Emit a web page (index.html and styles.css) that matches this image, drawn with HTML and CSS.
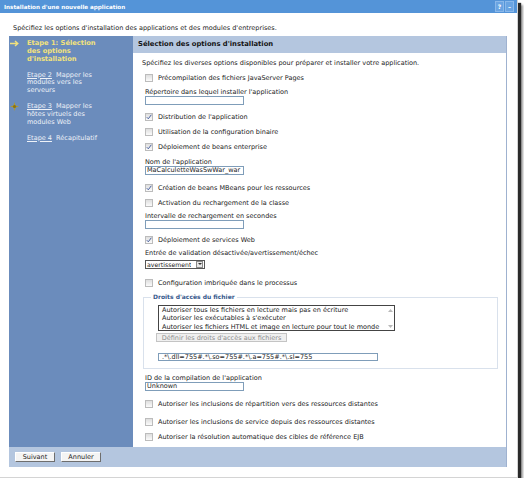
FILE: index.html
```html
<!DOCTYPE html>
<html lang="fr">
<head>
  <meta charset="UTF-8" />
  <title>Installation d'une nouvelle application</title>
  <link rel="stylesheet" href="styles.css">
</head>
<body>
  <div class="window">
    <div class="titlebar">
      <span class="title">Installation d'une nouvelle application</span>
      <span class="tb-icons">
        <span class="tb-btn">?</span>
        <span class="tb-btn">–</span>
      </span>
    </div>

    <p class="intro">Spécifiez les options d'installation des applications et des modules d'entreprises.</p>

    <div class="wizard">
      <ul class="steps">
        <li class="step current">
          <span class="marker">
            <svg width="9" height="7" viewBox="0 0 9 7"><path d="M0 3.5H7.5M5 1L7.8 3.5L5 6" fill="none" stroke="#f2e27c" stroke-width="1.4"/></svg>
          </span>
          <span>Etape 1: Sélection<br>des options<br>d'installation</span>
        </li>
        <li class="step">
          <span class="marker"></span>
          <span><a href="#">Etape 2</a>&nbsp; Mapper les<br>modules vers les<br>serveurs</span>
        </li>
        <li class="step">
          <span class="marker">
            <svg width="9" height="9" viewBox="0 0 9 9"><path d="M4.5 0L5.4 3.6L9 4.5L5.4 5.4L4.5 9L3.6 5.4L0 4.5L3.6 3.6Z" fill="#b89a22"/><circle cx="4.5" cy="4.5" r="1.6" fill="#8a7314"/></svg>
          </span>
          <span><a href="#">Etape 3</a>&nbsp; Mapper les<br>hôtes virtuels des<br>modules Web</span>
        </li>
        <li class="step">
          <span class="marker"></span>
          <span><a href="#">Etape 4</a>&nbsp; Récapitulatif</span>
        </li>
      </ul>

      <div class="panel">
        <h2 class="panel-head">Sélection des options d'installation</h2>
        <div class="panel-body">
          <p class="desc">Spécifiez les diverses options disponibles pour préparer et installer votre application.</p>

          <label class="check m-a"><span class="cb"></span>Précompilation des fichiers JavaServer Pages</label>
          <div class="field-label m-b">Répertoire dans lequel installer l'application</div>
          <div class="text-input"></div>

          <label class="check m-c"><span class="cb on"><svg width="6" height="6" viewBox="0 0 6 6"><path d="M0.8 3.2L2.3 4.8L5.3 0.8" fill="none" stroke="#4a62a0" stroke-width="1"/></svg></span>Distribution de l'application</label>
          <label class="check"><span class="cb"></span>Utilisation de la configuration binaire</label>
          <label class="check"><span class="cb on"><svg width="6" height="6" viewBox="0 0 6 6"><path d="M0.8 3.2L2.3 4.8L5.3 0.8" fill="none" stroke="#4a62a0" stroke-width="1"/></svg></span>Déploiement de beans enterprise</label>
          <div class="field-label m-d">Nom de l'application</div>
          <div class="text-input">MaCalculetteWasSwWar_war</div>

          <label class="check m-e"><span class="cb on"><svg width="6" height="6" viewBox="0 0 6 6"><path d="M0.8 3.2L2.3 4.8L5.3 0.8" fill="none" stroke="#4a62a0" stroke-width="1"/></svg></span>Création de beans MBeans pour les ressources</label>
          <label class="check"><span class="cb"></span>Activation du rechargement de la classe</label>
          <div class="field-label m-f">Intervalle de rechargement en secondes</div>
          <div class="text-input"></div>

          <label class="check m-g"><span class="cb on"><svg width="6" height="6" viewBox="0 0 6 6"><path d="M0.8 3.2L2.3 4.8L5.3 0.8" fill="none" stroke="#4a62a0" stroke-width="1"/></svg></span>Déploiement de services Web</label>
          <div class="field-label m-f">Entrée de validation désactivée/avertissement/échec</div>
          <div class="select">
            <span class="select-value">avertissement</span>
            <span class="select-btn"><svg width="4" height="2" viewBox="0 0 4 2"><path d="M0 0H4L2 2Z" fill="#333"/></svg></span>
          </div>

          <label class="check m-h"><span class="cb"></span>Configuration imbriquée dans le processus</label>

          <fieldset class="perms">
            <legend>Droits d'accès du fichier</legend>
            <div class="listbox">
              <div class="list-items">
                <div>Autoriser tous les fichiers en lecture mais pas en écriture</div>
                <div>Autoriser les exécutables à s'exécuter</div>
                <div>Autoriser les fichiers HTML et image en lecture pour tout le monde</div>
              </div>
              <div class="scroll">
                <svg width="5" height="3" viewBox="0 0 5 3"><path d="M0 3H5L2.5 0Z" fill="#b9b9b9"/></svg>
                <svg width="5" height="3" viewBox="0 0 5 3"><path d="M0 0H5L2.5 3Z" fill="#b9b9b9"/></svg>
              </div>
            </div>
            <button class="btn-disabled" disabled>Définir les droits d'accès aux fichiers</button>
            <div class="text-input wide">.*\.dll=755#.*\.so=755#.*\.a=755#.*\.sl=755</div>
          </fieldset>

          <div class="field-label m-i">ID de la compilation de l'application</div>
          <div class="text-input">Unknown</div>

          <label class="check m-j"><span class="cb"></span>Autoriser les inclusions de répartition vers des ressources distantes</label>
          <label class="check m-k"><span class="cb"></span>Autoriser les inclusions de service depuis des ressources distantes</label>
          <label class="check"><span class="cb"></span>Autoriser la résolution automatique des cibles de référence EJB</label>
        </div>
      </div>

      <div class="actions">
        <button class="btn">Suivant</button>
        <button class="btn">Annuler</button>
      </div>
    </div>
  </div>
</body>
</html>
```

FILE: styles.css
```css
body {
  margin: 0;
  background: #ffffff;
  font-family: "DejaVu Sans", Verdana, sans-serif;
  font-size: 6.5px;
  color: #222;
}
.window {
  width: 518px;
  height: 478px;
  background: #fff;
  border-right: 1px solid #d4d4d4;
  border-bottom: 1px solid #d4d4d4;
  box-sizing: border-box;
  box-shadow: 3px 3px 1px #2a2a2a, 5px 5px 2px rgba(60, 60, 60, 0.5);
}
.titlebar {
  height: 13px;
  background: #5494d8;
  display: flex;
  align-items: center;
  justify-content: space-between;
  padding: 0 3px 0 4px;
}
.title {
  color: #fff;
  font-weight: bold;
  font-size: 5.6px;
}
.tb-icons {
  display: flex;
  gap: 1px;
}
.tb-btn {
  width: 7px;
  height: 9px;
  line-height: 9px;
  text-align: center;
  color: #fff;
  font-size: 6px;
  font-weight: bold;
  background: #6aa4e2;
  border: 1px solid #8ab8ea;
}
.intro {
  margin: 0 0 3px 13px;
  padding-top: 10px;
  line-height: 10px;
}
.wizard {
  margin-left: 9px;
  width: 498px;
  height: 431px;
  display: grid;
  grid-template-columns: 124px 1fr;
  grid-template-rows: 1fr 20px;
}
.steps {
  list-style: none;
  margin: 0;
  padding: 4px 0 0 1px;
  background: #6b8cbc;
  color: #eef2f8;
  line-height: 7.75px;
}
.step {
  display: flex;
  margin-bottom: 8.25px;
}
.step.current {
  color: #f2e27c;
  font-weight: bold;
  font-size: 6.7px;
}
.step a {
  color: #eef2f8;
  text-decoration: underline;
}
.marker {
  width: 17px;
  flex: none;
  display: flex;
  align-items: center;
  height: 7.75px;
}
.panel {
  background: #fff;
  border-right: 1px solid #9fb2d0;
  display: flex;
  flex-direction: column;
}
.panel-head {
  margin: 0;
  height: 17px;
  line-height: 17px;
  padding-left: 5px;
  background: #b4c6df;
  font-size: 6.8px;
  color: #141414;
}
.panel-body {
  padding: 5px 0 0 12px;
}
.desc {
  margin: 0 0 0 -3px;
  line-height: 10px;
}
.check {
  display: flex;
  align-items: center;
  height: 15px;
}
.cb {
  width: 6px;
  height: 6px;
  border: 1px solid #bcbcbc;
  background: linear-gradient(#dedede, #fbfbfb);
  margin-right: 5px;
  display: flex;
  align-items: center;
  justify-content: center;
}
.field-label {
  line-height: 8px;
}
.text-input {
  width: 99px;
  height: 9px;
  line-height: 7px;
  box-sizing: border-box;
  border: 1px solid #7f9db9;
  padding-left: 1px;
  white-space: nowrap;
  overflow: hidden;
}
.text-input.wide {
  width: 220px;
  height: 8px;
  line-height: 6px;
  padding-left: 3px;
  margin-top: 11px;
}
.select {
  margin-top: 2.5px;
  width: 60px;
  height: 9px;
  box-sizing: border-box;
  border: 1px solid #555;
  display: flex;
  justify-content: space-between;
  align-items: center;
}
.select-value {
  padding-left: 1px;
  font-size: 6.2px;
  white-space: nowrap;
  overflow: hidden;
}
.select-btn {
  flex: none;
  width: 5px;
  height: 5px;
  margin-right: 1px;
  border: 1px solid #8a8a8a;
  background: #e8e8e8;
  display: flex;
  align-items: center;
  justify-content: center;
}
.perms {
  margin: 2.5px 8px 0 -2px;
  padding: 0 0 7px 14px;
  border: 1px solid #d9e1ec;
}
.perms legend {
  margin-left: -7px;
  padding: 0 2px;
  line-height: 8px;
  font-weight: bold;
  font-size: 6px;
  color: #36598c;
}
.listbox {
  margin-top: 4px;
  width: 237px;
  height: 26px;
  box-sizing: border-box;
  border: 1px solid #444;
  display: flex;
}
.list-items {
  flex: 1;
  padding: 0 0 0 3px;
  line-height: 8.3px;
  white-space: nowrap;
  overflow: hidden;
}
.scroll {
  width: 8px;
  display: flex;
  flex-direction: column;
  justify-content: space-between;
  align-items: center;
  padding: 3px 0 2px;
}
.btn-disabled {
  display: block;
  margin: 2px 0 0 -2px;
  width: 131px;
  height: 9px;
  padding: 0;
  font: inherit;
  color: #8d8d8d;
  background: #f0f0f0;
  border: 1px solid #c4c4c4;
}
.actions {
  grid-column: 1 / 3;
  background: #b4c6df;
  border-right: 1px solid #9fb2d0;
  display: flex;
  align-items: center;
  gap: 6px;
  padding-left: 6px;
}
.btn {
  width: 40px;
  height: 10px;
  padding: 0;
  font: inherit;
  color: #222;
  background: #f4f4f4;
  border: 1px solid;
  border-color: #fff #6e6e6e #6e6e6e #fff;
}

/* vertical rhythm of the option list */
.m-a { margin-top: 2.5px; }
.m-b { margin-top: 2px; }
.m-c { margin-top: 5px; }
.m-d { margin-top: 3.5px; }
.m-e { margin-top: 5.5px; }
.m-f { margin-top: 1.5px; }
.m-g { margin-top: 3.5px; }
.m-h { margin-top: 7px; }
.m-i { margin-top: 5px; }
.m-j { margin-top: 5.5px; }
.m-k { margin-top: 2.5px; }
```
